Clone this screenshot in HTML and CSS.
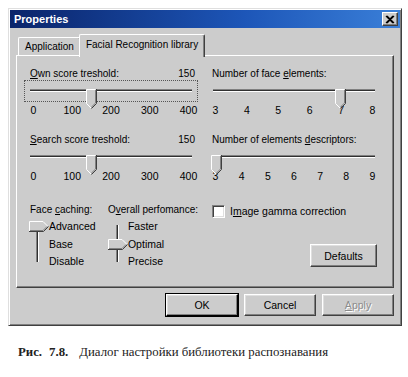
FILE: index.html
```html
<!DOCTYPE html>
<html lang="en">
<head>
    <meta charset="UTF-8">
    <title>Properties</title>
    <link rel="stylesheet" href="styles.css">
</head>
<body>
    <div class="dialog">
        <div class="titlebar">
            <span class="title">Properties</span>
            <span class="close">
                <svg width="10" height="9" viewBox="0 0 10 9"><path d="M1 1 L8 8 M2 1 L9 8 M8 1 L1 8 M9 1 L2 8" stroke="#000" stroke-width="1.2"/></svg>
            </span>
        </div>
        <div class="body">
            <div class="tabs">
                <div class="tab">Application</div>
                <div class="tab active">Facial Recognition library</div>
            </div>
            <div class="panel">
                <div class="grid">
                    <!-- own score -->
                    <div class="group left">
                        <div class="caption"><span><u>O</u>wn score treshold:</span><span>150</span></div>
                        <div class="slider focus">
                            <div class="rail">
                                <div class="groove"></div>
                                <svg class="thumb" style="--pos: 0.375" width="11" height="20" viewBox="0 0 11 20">
                                    <path d="M0 0 H10 V14 L5 19 L0 14 Z" fill="#cccccc"/>
                                    <path d="M0.5 14.5 V0.5 H9.5" fill="none" stroke="#fff"/>
                                    <path d="M0.5 14.5 L5 19" fill="none" stroke="#fff"/>
                                    <path d="M10.5 0 V14.5 L5.5 19.5" fill="none" stroke="#404040"/>
                                    <path d="M9.5 1 V14 L5.2 18.3" fill="none" stroke="#808080"/>
                                </svg>
                            </div>
                        </div>
                        <div class="ticks"><span>0</span><span>100</span><span>200</span><span>300</span><span>400</span></div>
                    </div>
                    <!-- face elements -->
                    <div class="group right">
                        <div class="caption"><span>Number of face <u>e</u>lements:</span></div>
                        <div class="slider">
                            <div class="rail">
                                <div class="groove"></div>
                                <svg class="thumb" style="--pos: 0.8" width="11" height="20" viewBox="0 0 11 20">
                                    <path d="M0 0 H10 V14 L5 19 L0 14 Z" fill="#cccccc"/>
                                    <path d="M0.5 14.5 V0.5 H9.5" fill="none" stroke="#fff"/>
                                    <path d="M0.5 14.5 L5 19" fill="none" stroke="#fff"/>
                                    <path d="M10.5 0 V14.5 L5.5 19.5" fill="none" stroke="#404040"/>
                                    <path d="M9.5 1 V14 L5.2 18.3" fill="none" stroke="#808080"/>
                                </svg>
                            </div>
                        </div>
                        <div class="ticks"><span>3</span><span>4</span><span>5</span><span>6</span><span>7</span><span>8</span></div>
                    </div>
                    <!-- search score -->
                    <div class="group left">
                        <div class="caption"><span><u>S</u>earch score treshold:</span><span>150</span></div>
                        <div class="slider">
                            <div class="rail">
                                <div class="groove"></div>
                                <svg class="thumb" style="--pos: 0.375" width="11" height="20" viewBox="0 0 11 20">
                                    <path d="M0 0 H10 V14 L5 19 L0 14 Z" fill="#cccccc"/>
                                    <path d="M0.5 14.5 V0.5 H9.5" fill="none" stroke="#fff"/>
                                    <path d="M0.5 14.5 L5 19" fill="none" stroke="#fff"/>
                                    <path d="M10.5 0 V14.5 L5.5 19.5" fill="none" stroke="#404040"/>
                                    <path d="M9.5 1 V14 L5.2 18.3" fill="none" stroke="#808080"/>
                                </svg>
                            </div>
                        </div>
                        <div class="ticks"><span>0</span><span>100</span><span>200</span><span>300</span><span>400</span></div>
                    </div>
                    <!-- descriptors -->
                    <div class="group right">
                        <div class="caption"><span>Number of elements <u>d</u>escriptors:</span></div>
                        <div class="slider">
                            <div class="rail">
                                <div class="groove"></div>
                                <svg class="thumb" style="--pos: 0" width="11" height="20" viewBox="0 0 11 20">
                                    <path d="M0 0 H10 V14 L5 19 L0 14 Z" fill="#cccccc"/>
                                    <path d="M0.5 14.5 V0.5 H9.5" fill="none" stroke="#fff"/>
                                    <path d="M0.5 14.5 L5 19" fill="none" stroke="#fff"/>
                                    <path d="M10.5 0 V14.5 L5.5 19.5" fill="none" stroke="#404040"/>
                                    <path d="M9.5 1 V14 L5.2 18.3" fill="none" stroke="#808080"/>
                                </svg>
                            </div>
                        </div>
                        <div class="ticks"><span>3</span><span>4</span><span>5</span><span>6</span><span>7</span><span>8</span><span>9</span></div>
                    </div>
                    <!-- vertical sliders -->
                    <div class="bottom-left">
                        <div class="vgroup face">
                            <div class="caption"><span>Face <u>c</u>aching:</span></div>
                            <div class="vslider">
                                <div class="vrail">
                                    <div class="vline"></div>
                                    <svg class="vthumb" style="--pos: 0" width="20" height="11" viewBox="0 0 20 11">
                                        <path d="M0 0 H14 L19 5 L14 10 H0 Z" fill="#cccccc"/>
                                        <path d="M0.5 10 V0.5 H14 L18.5 5" fill="none" stroke="#fff"/>
                                        <path d="M0 10.5 H14.5 L19.5 5.5" fill="none" stroke="#404040"/>
                                        <path d="M1 9.5 H14 L18 5.5" fill="none" stroke="#808080"/>
                                    </svg>
                                </div>
                                <div class="vlabels"><span>Advanced</span><span>Base</span><span>Disable</span></div>
                            </div>
                        </div>
                        <div class="vgroup perf">
                            <div class="caption"><span>O<u>v</u>erall perfomance:</span></div>
                            <div class="vslider">
                                <div class="vrail">
                                    <div class="vline"></div>
                                    <svg class="vthumb" style="--pos: 0.5" width="20" height="11" viewBox="0 0 20 11">
                                        <path d="M0 0 H14 L19 5 L14 10 H0 Z" fill="#cccccc"/>
                                        <path d="M0.5 10 V0.5 H14 L18.5 5" fill="none" stroke="#fff"/>
                                        <path d="M0 10.5 H14.5 L19.5 5.5" fill="none" stroke="#404040"/>
                                        <path d="M1 9.5 H14 L18 5.5" fill="none" stroke="#808080"/>
                                    </svg>
                                </div>
                                <div class="vlabels"><span>Faster</span><span>Optimal</span><span>Precise</span></div>
                            </div>
                        </div>
                    </div>
                    <div class="bottom-right">
                        <label class="check"><span class="box"></span><span>I<u>m</u>age gamma correction</span></label>
                        <button class="btn defaults">Defaults</button>
                    </div>
                </div>
            </div>
            <div class="buttons">
                <button class="btn default">OK</button>
                <button class="btn">Cancel</button>
                <button class="btn disabled"><u>A</u>pply</button>
            </div>
        </div>
    </div>
    <p class="figcaption"><b class="fig-num">Рис.</b><b class="fig-num">7.8.</b>Диалог настройки библиотеки распознавания</p>
</body>
</html>
```

FILE: styles.css
```css
body {
    margin: 0;
    background: #fff;
    font-family: "Liberation Sans", Arial, sans-serif;
    font-size: 10px;
    color: #000;
}
u {
    text-decoration-thickness: 1px;
    text-underline-offset: 1px;
}
.dialog {
    margin: 8px 0 0 8px;
    width: 394px;
    height: 318px;
    box-sizing: border-box;
    background: #cccccc;
    border: 1px solid;
    border-color: #dfdfdf #404040 #404040 #dfdfdf;
    box-shadow: inset 1px 1px #fff, inset -1px -1px #808080;
    padding: 1px;
}
.titlebar {
    height: 18px;
    display: flex;
    align-items: center;
    justify-content: space-between;
    padding: 0 2px 0 4px;
    background: linear-gradient(90deg, #0a246a, #1d56b8 60%, #3a7fd8);
}
.title {
    color: #fff;
    font-weight: bold;
    font-size: 11px;
}
.close {
    width: 16px;
    height: 14px;
    box-sizing: border-box;
    display: flex;
    align-items: center;
    justify-content: center;
    background: #cccccc;
    border: 1px solid;
    border-color: #fff #404040 #404040 #fff;
    box-shadow: inset -1px -1px #808080;
}
.body {
    padding: 6px 6px 0 6px;
}
.tabs {
    display: flex;
    align-items: flex-end;
    height: 21px;
    padding-left: 2px;
}
.tab {
    height: 18px;
    line-height: 17px;
    padding: 0 6px;
    box-sizing: border-box;
    border: 1px solid;
    border-bottom: none;
    border-color: #fff #404040 #404040 #fff;
    border-radius: 2px 2px 0 0;
    box-shadow: inset -1px 0 #808080;
}
.tab.active {
    position: relative;
    z-index: 1;
    height: 23px;
    line-height: 20px;
    padding: 0 6px;
    margin: 0 -2px -2px -2px;
    background: #cccccc;
}
.panel {
    height: 233px;
    box-sizing: border-box;
    border: 1px solid;
    border-color: #fff #404040 #404040 #fff;
    box-shadow: inset -1px -1px #808080;
    padding: 12px 0 0 7px;
}
.grid {
    display: grid;
    grid-template-columns: 174px 168px;
    column-gap: 12px;
    row-gap: 18px;
}
.caption {
    display: flex;
    justify-content: space-between;
    line-height: 12px;
    height: 12px;
    white-space: nowrap;
}
.group.left .caption {
    padding: 0 3px 0 6px;
}
.group.right .caption {
    padding-left: 2px;
}
.slider {
    height: 22px;
    box-sizing: border-box;
    border: 1px dotted transparent;
    padding: 0 3px;
}
.slider.focus {
    border-color: #555;
}
.group.right .slider {
    padding: 0;
}
.rail {
    position: relative;
    height: 100%;
}
.groove {
    margin: 8px 2px 0 2px;
    height: 1px;
    border-top: 1px solid #808080;
    background: #303030;
    border-bottom: 1px solid #fff;
}
.thumb {
    position: absolute;
    top: 0;
    left: calc(var(--pos) * (100% - 11px));
}
.ticks {
    display: flex;
    justify-content: space-between;
    line-height: 12px;
    margin-top: 2px;
    padding: 0 4px;
    font-size: 10.5px;
}
.group.right .ticks {
    padding: 0;
}
.ticks span {
    width: 11px;
    display: flex;
    justify-content: center;
    white-space: nowrap;
}
.bottom-left {
    display: flex;
    margin-top: 4px;
    padding-left: 6px;
}
.vgroup.face {
    width: 78px;
}
.vslider {
    display: flex;
    margin-top: 2px;
}
.vrail {
    position: relative;
    width: 20px;
    height: 52px;
}
.face .vrail {
    margin-left: -1px;
}
.vline {
    position: absolute;
    top: 7px;
    height: 37px;
    width: 1px;
    background: #303030;
    border-left: 1px solid #808080;
    border-right: 1px solid #fff;
}
.face .vline {
    left: 7px;
}
.perf .vline {
    left: 8px;
}
.vthumb {
    position: absolute;
    left: 0;
    top: calc(var(--pos) * 35px + 3px);
}
.vlabels {
    display: flex;
    flex-direction: column;
    font-size: 10.5px;
}
.vlabels span {
    line-height: 17.5px;
}
.bottom-right {
    display: flex;
    flex-direction: column;
    align-items: flex-start;
    margin-top: 5px;
    padding-left: 2px;
}
.check {
    display: flex;
    align-items: center;
    gap: 5px;
    line-height: 13px;
    font-size: 10.5px;
}
.box {
    width: 13px;
    height: 13px;
    box-sizing: border-box;
    background: #fff;
    border: 1px solid;
    border-color: #808080 #fff #fff #808080;
    box-shadow: inset 1px 1px #404040, inset -1px -1px #dfdfdf;
}
.btn {
    font-family: inherit;
    font-size: 10.5px;
    color: #000;
    background: #cccccc;
    border: 1px solid;
    border-color: #fff #404040 #404040 #fff;
    box-shadow: inset -1px -1px #808080, inset 1px 1px #dfdfdf;
    padding: 0;
    width: 72px;
    height: 22px;
}
.btn.defaults {
    width: 67px;
    height: 23px;
    align-self: flex-end;
    margin: 26px 1px 0 0;
}
.btn.default {
    outline: 1px solid #000;
    outline-offset: 0;
    border-color: #fff #000 #000 #fff;
}
.btn.disabled {
    color: #8c8c8c;
    text-shadow: 1px 1px #fff;
}
.buttons {
    display: flex;
    justify-content: flex-end;
    gap: 6px;
    margin-top: 6px;
}
.figcaption {
    margin: 19px 0 0 18px;
    font-family: "Liberation Serif", "Times New Roman", serif;
    font-size: 12.8px;
    color: #222;
}
.fig-num {
    margin-right: 7px;
}
.fig-num + .fig-num {
    margin-right: 11px;
}
```
